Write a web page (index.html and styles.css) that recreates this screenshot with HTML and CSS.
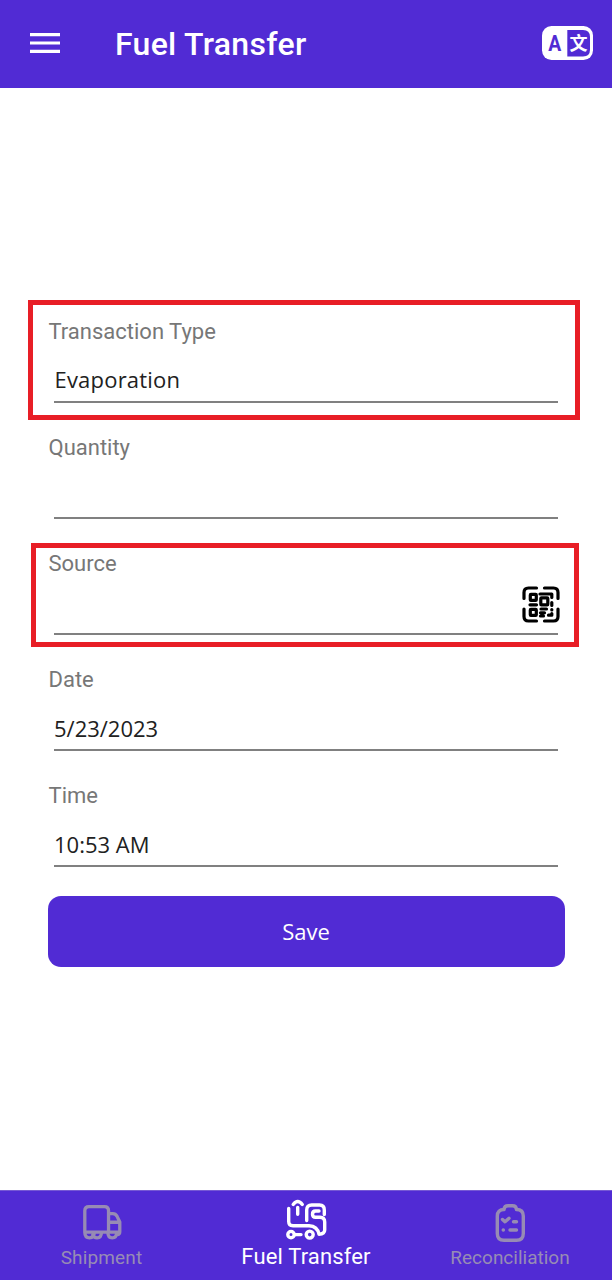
FILE: index.html
```html
<!DOCTYPE html>
<html lang="en">
<head>
<meta charset="utf-8">
<title>Fuel Transfer</title>
<link rel="stylesheet" href="styles.css">
</head>
<body>
<div class="app">
  <header class="bar">
    <svg class="menu" viewBox="0 0 30 20"><path d="M0 1.6H30M0 10H30M0 18.3H30"/></svg>
    <h1 class="title">Fuel Transfer</h1>
    <svg class="lang" viewBox="0 0 52 34">
      <rect class="lang-base" width="51" height="34" rx="9.5"/>
      <path class="lang-panel" d="M25.3 4H41q7 0 7 7V23.500q0 7-7 7H25.300z"/>
      <text class="lang-a" x="12.800" y="25.300" textLength="13" lengthAdjust="spacingAndGlyphs">A</text>
      <text class="lang-w" x="36.500" y="23.600">文</text>
    </svg>
  </header>

  <main class="form">
    <div class="field">
      <label class="label">Transaction Type</label>
      <div class="value value-type">Evaporation</div>
      <span class="highlight highlight-type"></span>
    </div>
    <div class="field">
      <label class="label">Quantity</label>
      <div class="value"></div>
    </div>
    <div class="field">
      <label class="label">Source</label>
      <div class="value value-scan">
        <svg class="qr" viewBox="0 0 42 42">
          <path class="frame" d="M4 14.500V8.500Q4 4 8.500 4H16.500M24.500 4H33.500Q38 4 38 8.500V14.500M38 25V32.500Q38 37 33.500 37H24.500M16.500 37H8.500Q4 37 4 32.500V25"/>
          <rect x="10.300" y="10.300" width="6" height="6" rx=".6"/>
          <rect x="20.800" y="13.800" width="7" height="7" rx=".6"/>
          <rect x="10.300" y="25.300" width="6" height="6" rx=".6"/>
          <path d="M20 10H31.800V13.500M31.800 18.500V21.500M10 20.800H16.500M21 25H26.500M31.800 25.500V26M20.500 28.800H24.500M31.800 29.500V31.200H28.500M20.500 32H23.500"/>
        </svg>
      </div>
      <span class="highlight highlight-source"></span>
    </div>
    <div class="field">
      <label class="label">Date</label>
      <div class="value">5/23/2023</div>
    </div>
    <div class="field">
      <label class="label">Time</label>
      <div class="value">10:53 AM</div>
    </div>
    <button class="save">Save</button>
  </main>

  <nav class="tabs">
    <a class="tab tab-shipment">
      <svg class="icon" viewBox="0 0 44 44"><path d="M4.400 33V11Q4.400 6.700 8.700 6.700H24.500Q28.700 6.700 28.700 11V33M28.700 14H33Q36 14 37.300 16.500L40.200 22.500V32.500Q40.200 35 38 35.500M28.700 22.800H40M4.400 32.800H40M4.400 33Q4.400 38.700 9.300 38.700T14 33M12.500 36Q13.500 38.700 17 38.700Q21.300 38.700 21.500 33M28 33Q28 38.700 32.500 38.700T37 33"/></svg>
      <span>Shipment</span>
    </a>
    <a class="tab tab-active">
      <svg class="icon" viewBox="0 0 44 44"><path d="M4.700 10.500V23.500Q4.700 27.700 9 27.700H25Q33.500 28 35 36.300Q40.700 36 40.700 32V24Q40.700 19.500 36 19.300H31.500Q28.500 19.300 28.500 16.200T31.500 13H35M22.700 22.500V12Q22.700 7 27.700 7H35.500Q40.300 7 40.300 12V16.500M13.700 9.500V16.300M9.200 6.500Q13.700 .500 18.300 6.500M10.500 36.600H17"/><circle cx="7" cy="36.600" r="3.200"/><circle cx="25.700" cy="36.600" r="3.500"/></svg>
      <span>Fuel Transfer</span>
    </a>
    <a class="tab tab-reconciliation">
      <svg class="icon" viewBox="0 0 44 44"><path d="M16 10.500Q9.300 10.500 9.300 17V34.500Q9.300 41.300 16 41.300H28.500Q35.300 41.300 35.300 34.500V17Q35.300 10.500 28.500 10.500Q28.200 6.800 24.500 6.800H20Q16.300 6.800 16 10.500M14.500 20.500L17 22.800L21 19.300M25.500 22.700H28.500M15.200 31H15.400M22 31H28.500"/></svg>
      <span>Reconciliation</span>
    </a>
  </nav>
</div>
</body>
</html>
```

FILE: styles.css
```css
* { box-sizing: border-box; }

body {
  margin: 0;
  background: #fff;
  font-family: Roboto, "Liberation Sans", sans-serif;
}

.app {
  display: flex;
  flex-direction: column;
  width: 612px;
  height: 1280px;
}

.bar {
  display: flex;
  align-items: center;
  height: 88px;
  padding: 0 18px 2px 30px;
  background: #512bd4;
  color: #fff;
}

.menu {
  width: 30px;
  height: 20px;
  stroke: #fff;
  stroke-width: 3.200;
}

.title {
  flex: 1;
  margin: 1px 0 0 55px;
  font-size: 32px;
  font-weight: 500;
  line-height: 40px;
  letter-spacing: .3px;
}

.lang { width: 52px; height: 34px; }
.lang-base { fill: #fff; }
.lang-panel { fill: #512bd4; }
.lang text { text-anchor: middle; font-weight: 700; }
.lang-a { fill: #512bd4; font-size: 22.500px; }
.lang-w { fill: #fff; font: 700 18px "Noto Sans CJK SC", sans-serif; }

.form {
  display: flex;
  flex: 1;
  flex-direction: column;
  gap: 29px;
  padding: 228px 47px 0 48px;
}

.field { position: relative; height: 87px; }

.label {
  display: block;
  height: 31px;
  padding: 1px 0 0 .5px;
  color: #777;
  font-size: 22px;
  line-height: 30px;
}

.value {
  display: flex;
  align-items: center;
  height: 56px;
  margin: 0 7px 0 6px;
  padding-top: 12px;
  border-bottom: 2px solid #808080;
  color: #212121;
  font-family: "Open Sans", "Noto Sans", sans-serif;
  font-size: 22px;
}

.value-type { padding-left: .5px; padding-top: 9px; letter-spacing: .2px; }
.value-scan { justify-content: flex-end; padding: 0; }

.qr {
  width: 42px;
  height: 42px;
  margin: -3px -4px 0 0;
  fill: none;
  stroke: #000;
  stroke-width: 3.200;
  stroke-linecap: round;
  stroke-linejoin: round;
}

.highlight {
  position: absolute;
  border: 5px solid #e81e26;
}

.highlight-type { inset: -16px -15px -17px -20px; }
.highlight-source { inset: -5px -14px -12px -17px; }

.save {
  height: 71px;
  margin: 0;
  padding: 0 1px 2px 0;
  border: 0;
  border-radius: 13px;
  background: #512bd4;
  color: #fff;
  font-family: "Open Sans", "Noto Sans", sans-serif;
  font-size: 22px;
}

.tabs {
  display: grid;
  grid-template-columns: repeat(3, 1fr);
  height: 90px;
  border-top: 1px solid #7659d4;
  background: #512bd4;
}

.tab {
  display: flex;
  flex-direction: column;
  align-items: center;
  padding-top: 8px;
  color: #978bb4;
  font-size: 19px;
  line-height: 30px;
}

.tab-shipment { padding-top: 9px; padding-right: 1px; letter-spacing: .15px; }
.tab-shipment .icon { height: 43px; }
.tab-active { padding-top: 7px; color: #fff; font-size: 22px; letter-spacing: .15px; }

.icon {
  width: 44px;
  height: 44px;
  fill: none;
  stroke: currentColor;
  stroke-width: 3.400;
  stroke-linecap: round;
  stroke-linejoin: round;
}
```
